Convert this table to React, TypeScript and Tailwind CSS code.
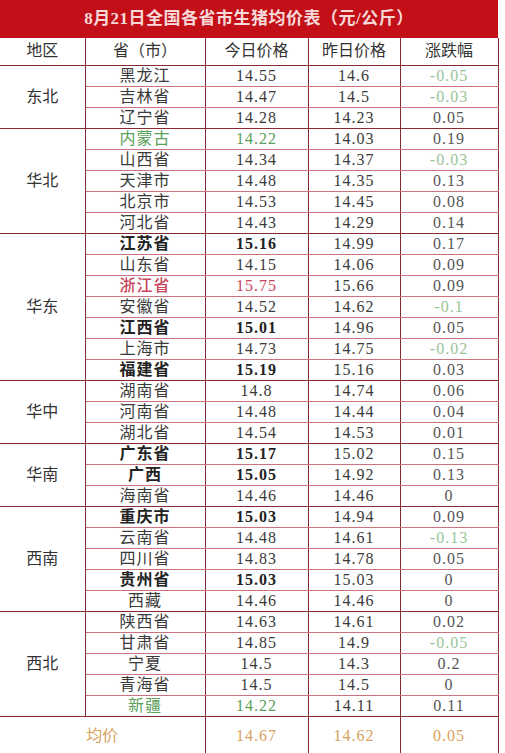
import React from "react"

type Style = "bold" | "green" | "red" | undefined

interface Row {
  name: string
  today: string
  yesterday: string
  change: string
  style?: Style
}

interface Region {
  name: string
  rows: Row[]
}

const r = (name: string, today: string, yesterday: string, change: string, style?: Style): Row => ({
  name,
  today,
  yesterday,
  change,
  style,
})

const regions: Region[] = [
  {
    name: "东北",
    rows: [r("黑龙江", "14.55", "14.6", "-0.05"), r("吉林省", "14.47", "14.5", "-0.03"), r("辽宁省", "14.28", "14.23", "0.05")],
  },
  {
    name: "华北",
    rows: [
      r("内蒙古", "14.22", "14.03", "0.19", "green"),
      r("山西省", "14.34", "14.37", "-0.03"),
      r("天津市", "14.48", "14.35", "0.13"),
      r("北京市", "14.53", "14.45", "0.08"),
      r("河北省", "14.43", "14.29", "0.14"),
    ],
  },
  {
    name: "华东",
    rows: [
      r("江苏省", "15.16", "14.99", "0.17", "bold"),
      r("山东省", "14.15", "14.06", "0.09"),
      r("浙江省", "15.75", "15.66", "0.09", "red"),
      r("安徽省", "14.52", "14.62", "-0.1"),
      r("江西省", "15.01", "14.96", "0.05", "bold"),
      r("上海市", "14.73", "14.75", "-0.02"),
      r("福建省", "15.19", "15.16", "0.03", "bold"),
    ],
  },
  {
    name: "华中",
    rows: [r("湖南省", "14.8", "14.74", "0.06"), r("河南省", "14.48", "14.44", "0.04"), r("湖北省", "14.54", "14.53", "0.01")],
  },
  {
    name: "华南",
    rows: [r("广东省", "15.17", "15.02", "0.15", "bold"), r("广西", "15.05", "14.92", "0.13", "bold"), r("海南省", "14.46", "14.46", "0")],
  },
  {
    name: "西南",
    rows: [
      r("重庆市", "15.03", "14.94", "0.09", "bold"),
      r("云南省", "14.48", "14.61", "-0.13"),
      r("四川省", "14.83", "14.78", "0.05"),
      r("贵州省", "15.03", "15.03", "0", "bold"),
      r("西藏", "14.46", "14.46", "0"),
    ],
  },
  {
    name: "西北",
    rows: [
      r("陕西省", "14.63", "14.61", "0.02"),
      r("甘肃省", "14.85", "14.9", "-0.05"),
      r("宁夏", "14.5", "14.3", "0.2"),
      r("青海省", "14.5", "14.5", "0"),
      r("新疆", "14.22", "14.11", "0.11", "green"),
    ],
  },
]

const font = { fontFamily: '"Liberation Serif", "Noto Sans CJK SC", serif' }

function styleClass(style: Style) {
  if (style === "bold") return "font-bold text-[#222]"
  if (style === "green") return "text-[#5aa05a]"
  if (style === "red") return "text-[#c8465c] font-medium"
  return "text-[#3a3a3a]"
}

export default function App() {
  return (
    <div className="w-[505px] h-[753px] overflow-hidden bg-white" style={font}>
      <div className="w-[498px]">
        <div className="h-[38px] bg-[#c30f17] flex items-center justify-center text-[17px] font-bold text-[#f7d9d9] tracking-[0.5px]">
          8月21日全国各省市生猪均价表（元/公斤）
        </div>
        <table className="w-[498px] table-fixed border-collapse">
          <colgroup>
            <col className="w-[85px]" />
            <col className="w-[120px]" />
            <col className="w-[103px]" />
            <col className="w-[92px]" />
            <col className="w-[98px]" />
          </colgroup>
          <thead>
            <tr className="h-[27px] text-[16px] text-[#333] leading-none">
              <th className="font-normal p-0 border-r border-b border-[#8a2a35]">地区</th>
              <th className="font-normal p-0 border-r border-b border-[#8a2a35]">省（市）</th>
              <th className="font-normal p-0 border-r border-b border-[#8a2a35]">今日价格</th>
              <th className="font-normal p-0 border-r border-b border-[#8a2a35]">昨日价格</th>
              <th className="font-normal p-0 border-r border-b border-[#8a2a35]">涨跌幅</th>
            </tr>
          </thead>
          <tbody>
            {regions.map((region) =>
              region.rows.map((row, i) => {
                const last = i === region.rows.length - 1
                const bottom = last ? "border-b border-b-[#8a2a35]" : "border-b border-b-[#cf7280]"
                const neg = row.change.startsWith("-")
                return (
                  <tr key={region.name + row.name} className="h-[21px] text-[16px] leading-none">
                    {i === 0 && (
                      <td
                        rowSpan={region.rows.length}
                        className="p-0 text-center text-[#333] border-r border-b border-[#8a2a35]"
                      >
                        {region.name}
                      </td>
                    )}
                    <td className={`p-0 text-center tracking-[1px] border-r border-r-[#8a2a35] ${bottom} ${styleClass(row.style)}`}>
                      {row.name}
                    </td>
                    <td className={`p-0 text-center tracking-[1px] border-r border-r-[#8a2a35] ${bottom} ${styleClass(row.style)}`}>
                      {row.today}
                    </td>
                    <td className={`p-0 text-center tracking-[1px] text-[#3a3a3a] border-r border-r-[#8a2a35] ${bottom}`}>
                      {row.yesterday}
                    </td>
                    <td
                      className={`p-0 text-center tracking-[1px] border-r border-r-[#8a2a35] ${bottom} ${
                        neg ? "text-[#98c498]" : "text-[#555]"
                      }`}
                    >
                      {row.change}
                    </td>
                  </tr>
                )
              })
            )}
            <tr className="h-[40px] text-[16px] leading-none text-[#d6a260]">
              <td colSpan={2} className="p-0 text-center border-r border-[#8a2a35]">
                均价
              </td>
              <td className="p-0 text-center tracking-[1px] border-r border-[#8a2a35]">14.67</td>
              <td className="p-0 text-center tracking-[1px] border-r border-[#8a2a35]">14.62</td>
              <td className="p-0 text-center tracking-[1px] border-r border-[#8a2a35]">0.05</td>
            </tr>
          </tbody>
        </table>
      </div>
    </div>
  )
}
